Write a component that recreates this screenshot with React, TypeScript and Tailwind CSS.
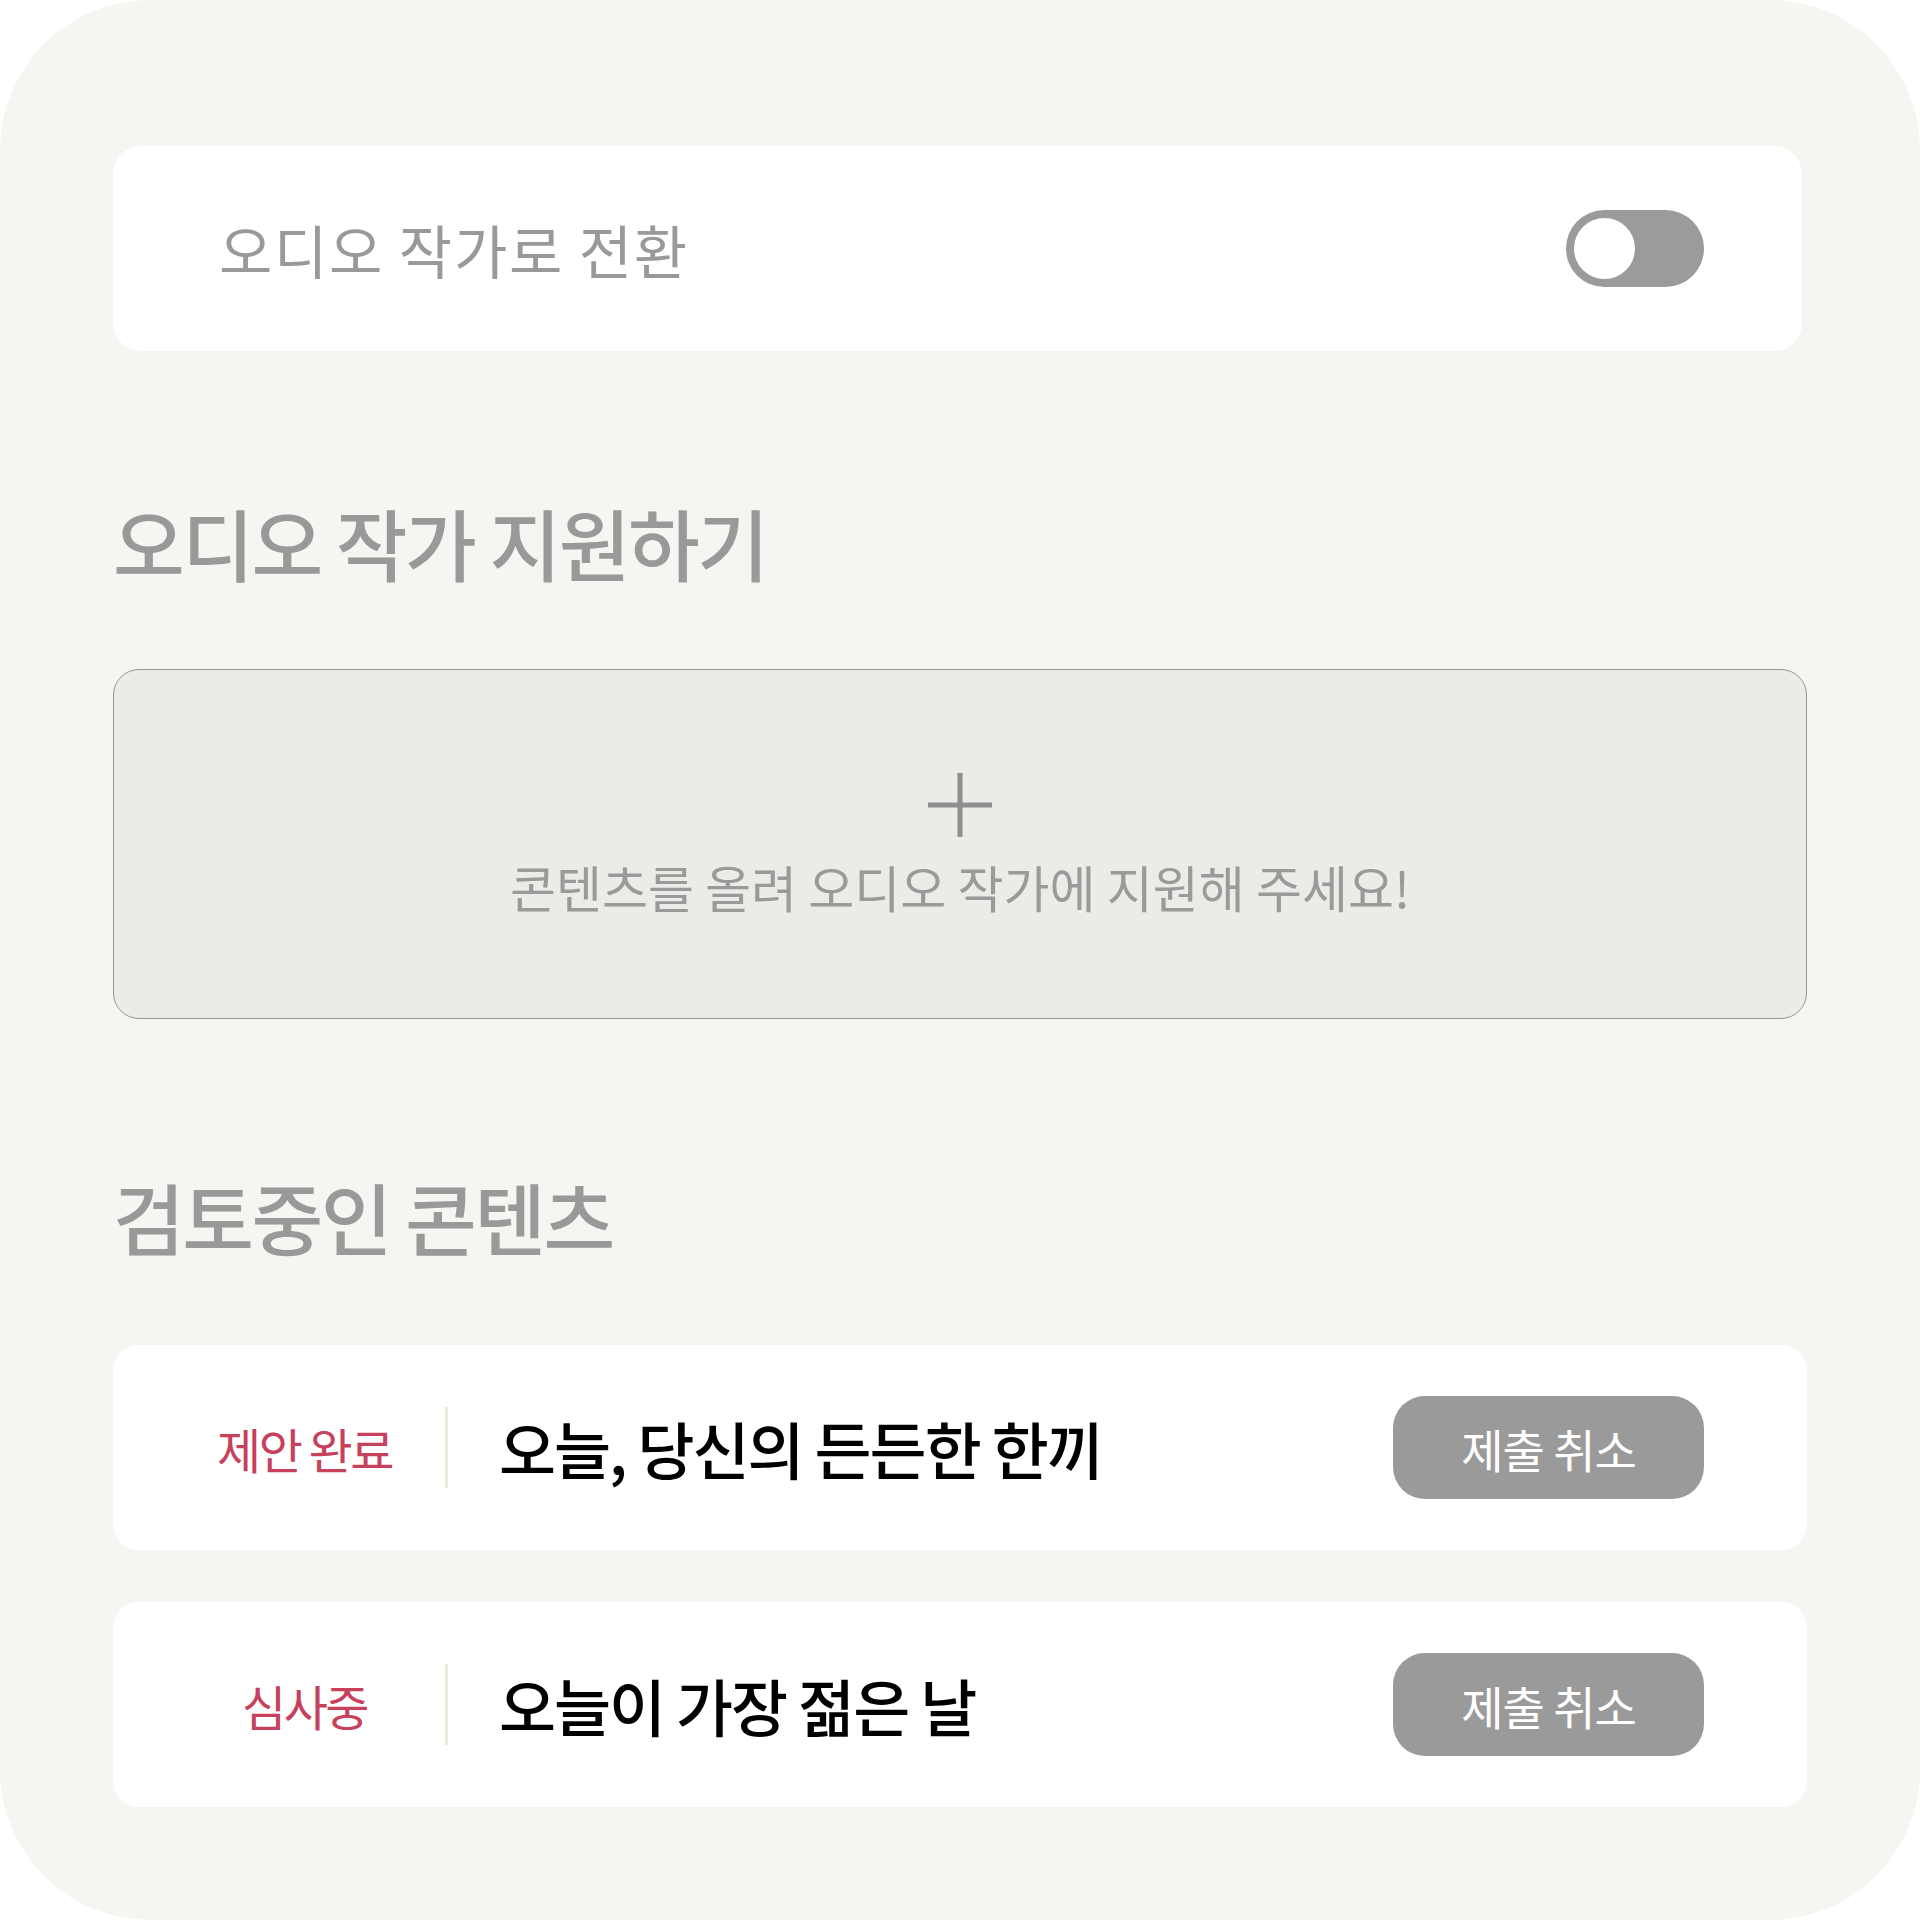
import { useState } from 'react';

interface Submission {
    id: number;
    status: string;
    title: string;
}

const submissions: Submission[] = [
    { id: 1, status: '제안 완료', title: '오늘, 당신의 든든한 한끼' },
    { id: 2, status: '심사중', title: '오늘이 가장 젊은 날' },
];

const font = { fontFamily: '"Noto Sans CJK KR", "Noto Sans", sans-serif' };

export default function App() {
    const [audioMode, setAudioMode] = useState(false);

    return (
        <div className="w-[1920px] h-[1920px] bg-white" style={font}>
            <div className="h-full rounded-[150px] bg-[#f6f5f1] px-[113px] pt-[146px] flex flex-col">
                {/* 전환 토글 */}
                <div className="h-[205px] mr-[5px] rounded-[28px] bg-white flex items-center justify-between pl-[106px] pr-[98px]">
                    <span className="text-[58px] leading-none tracking-[1.7px] text-[#999999]">오디오 작가로 전환</span>
                    <button
                        onClick={() => setAudioMode(!audioMode)}
                        className="w-[138px] h-[77px] rounded-full bg-[#9b9b9b] flex items-center px-[8px]"
                    >
                        <span className="block w-[61px] h-[61px] rounded-full bg-white" />
                    </button>
                </div>

                <h2 className="mt-[152px] text-[78px] leading-none font-medium tracking-[-2.5px] text-[#999999]">오디오 작가 지원하기</h2>

                <div className="mt-[88px] h-[350px] rounded-[26px] border border-[#999999] bg-[#edebe8] flex flex-col items-center justify-center">
                    <svg width="68" height="68" viewBox="0 0 68 68" className="mt-[-6px]">
                        <path d="M34 2v64M2 34h64" stroke="#8e8e8e" strokeWidth="5" />
                    </svg>
                    <p className="mt-[22px] text-[50px] leading-none tracking-[0px] text-[#9a9a9a]">
                        콘텐츠를 올려 오디오 작가에 지원해 주세요!
                    </p>
                </div>

                <h2 className="mt-[158px] text-[78px] leading-none font-medium tracking-[-2.5px] text-[#999999]">검토중인 콘텐츠</h2>

                <div className="mt-[90px] flex flex-col gap-[52px]">
                    {submissions.map((item) => (
                        <div key={item.id} className="h-[205px] rounded-[26px] bg-white flex items-center pl-[51px] pr-[103px]">
                            <div className="w-[281px] text-center text-[48px] leading-none tracking-[-2.5px] text-[#c7405c]">
                                {item.status}
                            </div>
                            <div className="w-[3px] h-[81px] bg-[#f0e8dc]" />
                            <div className="ml-[51px] flex-1 text-[62px] leading-none font-medium tracking-[-2px] text-black">
                                {item.title}
                            </div>
                            <button className="w-[311px] h-[103px] rounded-[32px] bg-[#9a9a9a] text-white text-[46px] leading-none tracking-[-1px]">
                                제출 취소
                            </button>
                        </div>
                    ))}
                </div>
            </div>
        </div>
    );
}
